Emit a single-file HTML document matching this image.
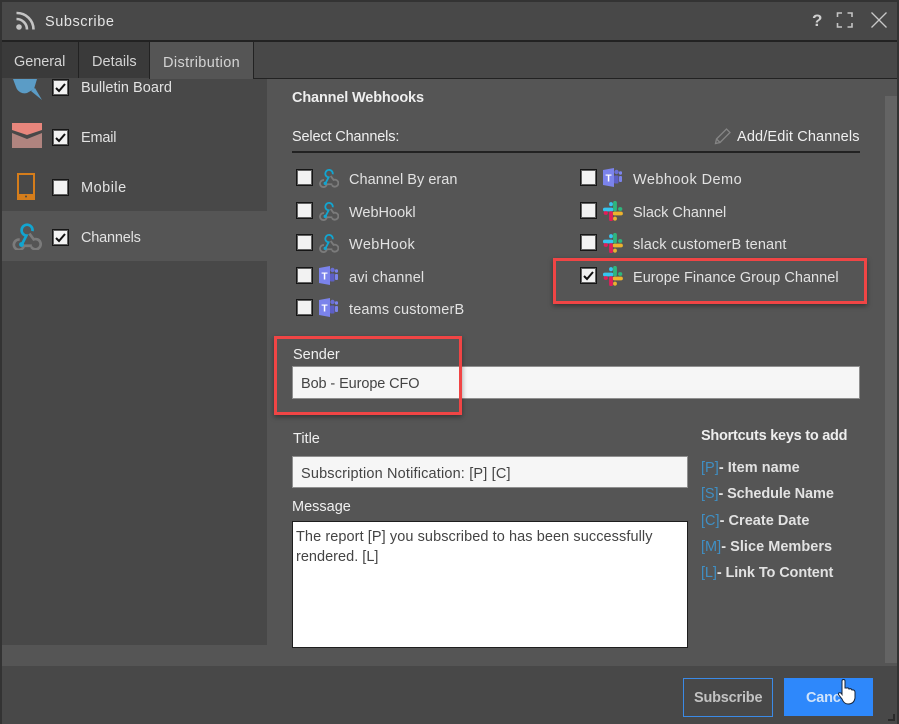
<!DOCTYPE html>
<html><head><meta charset="utf-8"><style>
html,body{margin:0;padding:0;background:#484848}
#r{position:relative;width:899px;height:724px;overflow:hidden;background:#484848;font-family:"Liberation Sans",sans-serif;font-size:14.5px;color:#e2e2e2}
#r div,#r svg{position:absolute}
.t{white-space:nowrap;line-height:20px;height:20px}
.c{width:15px;height:15px;background:#f2f2f2;border:1px solid #161616;box-shadow:0 0 0 1px rgba(50,50,50,.75) inset}
.b{font-weight:bold}
.k{color:#3f8fc4;font-weight:normal}
</style></head><body><div id="r">
<svg width="0" height="0" style="left:0;top:0"><defs>
<g id="hook"><g fill="none" stroke-width="2.2"><path d="M6 14.500 A4.200 4.200 0 1 0 9.500 19.500 H16" stroke="#7b7b7b"/><path d="M14 9.500 L17.500 14.300 A4.200 4.200 0 1 1 15.500 20.500" stroke="#7b7b7b"/><path d="M8 18 L11.500 11.200 A4.500 4.500 0 1 1 16.500 7.500" stroke="#12a5d0"/></g><circle cx="7.500" cy="18.500" r="2" fill="#12a5d0"/></g>
<g id="teams"><circle cx="13.500" cy="4" r="2.200" fill="#6a6fd6"/><circle cx="17.500" cy="5" r="1.700" fill="#7b83eb"/><rect x="11" y="7.500" width="4.500" height="8" rx="1" fill="#5d5fc4"/><rect x="16" y="8" width="3" height="6" rx="1" fill="#7b83eb"/><path d="M0 2 L11 0 V19 L0 17 Z" fill="#7b83eb"/><text x="2.500" y="13.500" font-family="Liberation Sans" font-size="10" font-weight="bold" fill="#fff">T</text></g>
<g id="slack" stroke-width="3.800" stroke-linecap="round" fill="none"><path d="M1.800 8.500 H8.500" stroke="#36c5f0"/><path d="M8 3 V3.400" stroke="#36c5f0"/><path d="M12 1.800 V8.500" stroke="#2eb67d"/><path d="M17 8 H17.400" stroke="#2eb67d"/><path d="M18 12.500 H11.500" stroke="#ecb22e"/><path d="M12 17.500 V17.800" stroke="#ecb22e"/><path d="M8 12 V18.400" stroke="#e01e5a"/><path d="M2.600 12 H3" stroke="#e01e5a"/></g>
</defs></svg>

<div style="left:0;top:0;width:899px;height:2px;background:#333"></div>
<div style="left:0;top:0;width:2px;height:724px;background:#333"></div>
<div style="left:897px;top:0;width:2px;height:724px;background:#333"></div>

<div style="left:2px;top:40px;width:895px;height:2px;background:#222"></div>
<svg style="left:15px;top:11px" width="21" height="20" viewBox="0 0 21 20"><circle cx="4" cy="16" r="2.800" fill="#c4c4c4"/><path d="M1.500 8 A10.500 10.500 0 0 1 12 18.500" fill="none" stroke="#c4c4c4" stroke-width="2.600"/><path d="M1.500 2 A16.500 16.500 0 0 1 18.500 18.500" fill="none" stroke="#c4c4c4" stroke-width="2.600"/></svg>
<div class="t" style="left:45px;top:12px;color:#e4e4e4;letter-spacing:.55px">Subscribe</div>
<div class="t b" style="left:812px;top:11px;color:#cfcfcf;font-size:17px">?</div>
<svg style="left:836px;top:11px" width="18" height="18" fill="none" stroke="#c4c4c4" stroke-width="1.600"><path d="M1.500 6 V2 H6 M11.500 2 H16 V6 M16 12 V16 H11.500 M6 16 H1.500 V12"/></svg>
<svg style="left:870px;top:11px" width="18" height="18" fill="none" stroke="#c8c8c8" stroke-width="1.300"><path d="M1.500 1.500 L16.500 16.500 M16.500 1.500 L1.500 16.500"/></svg>

<div style="left:2px;top:42px;width:76px;height:36px;background:#3a3a3a;border-right:1px solid #222"></div>
<div style="left:79px;top:42px;width:70px;height:36px;background:#3a3a3a"></div>
<div style="left:149px;top:42px;width:103px;height:37px;background:#555;border-left:1px solid #222;border-right:1px solid #222"></div>
<div style="left:253px;top:78px;width:644px;height:1px;background:#222"></div>
<div class="t" style="left:14px;top:52px;color:#d4d4d4;letter-spacing:-.05px">General</div>
<div class="t" style="left:92px;top:52px;color:#d4d4d4;letter-spacing:.05px">Details</div>
<div class="t" style="left:163px;top:53px;color:#d4d4d4;letter-spacing:.38px">Distribution</div>

<div style="left:2px;top:79px;width:895px;height:587px;background:#555"></div>
<div style="left:2px;top:79px;width:265px;height:566px;background:#484848"></div>
<div style="left:2px;top:211px;width:265px;height:50px;background:#555"></div>
<div style="left:885px;top:96px;width:12px;height:567px;background:#646464"></div>

<svg style="left:12px;top:79px" width="32" height="23" viewBox="0 0 32 23"><path d="M1 0 H25 L22 10 L15 14 A9 9 0 0 1 4 8 Z" fill="#5b9cc6"/><path d="M19 12 L30 21 L23 9 Z" fill="#5b9cc6"/></svg>
<div class="c" style="left:52px;top:79px"></div>
<svg style="left:54px;top:82px" width="14" height="12" fill="none" stroke="#111" stroke-width="2"><path d="M2 6 L5 9 L11 2"/></svg>
<div class="t" style="left:81px;top:78px;letter-spacing:.05px">Bulletin Board</div>

<svg style="left:12px;top:123px" width="30" height="25"><rect y="0" width="30" height="25" fill="#b0847f"/><path d="M0 0 H30 V7 L15 12 L0 7 Z" fill="#e8867c"/><path d="M0 7 L15 12 L30 7 V10 L15 16 L0 10 Z" fill="#484848"/></svg>
<div class="c" style="left:52px;top:129px"></div>
<svg style="left:54px;top:132px" width="14" height="12" fill="none" stroke="#111" stroke-width="2"><path d="M2 6 L5 9 L11 2"/></svg>
<div class="t" style="left:81px;top:128px;letter-spacing:-.2px">Email</div>

<svg style="left:17px;top:173px" width="18" height="27"><rect x="1" y="1" width="16" height="25" fill="none" stroke="#d57d1b" stroke-width="2"/><rect x="1" y="21" width="16" height="5" fill="#d57d1b"/><circle cx="9" cy="23.500" r="1" fill="#484848"/></svg>
<div class="c" style="left:52px;top:179px"></div>
<div class="t" style="left:81px;top:178px;letter-spacing:.5px">Mobile</div>

<svg style="left:12px;top:222px" width="30" height="28" viewBox="0 0 24 23"><use href="#hook"/></svg>
<div class="c" style="left:52px;top:229px"></div>
<svg style="left:54px;top:232px" width="14" height="12" fill="none" stroke="#111" stroke-width="2"><path d="M2 6 L5 9 L11 2"/></svg>
<div class="t" style="left:81px;top:228px;letter-spacing:-.2px">Channels</div>

<div class="t b" style="left:292px;top:88px;letter-spacing:-.15px;color:#eee">Channel Webhooks</div>
<div class="t" style="left:292px;top:127px;letter-spacing:-.15px;color:#f0f0f0">Select Channels:</div>
<svg style="left:714px;top:127px" width="18" height="18" fill="none" stroke="#858585" stroke-width="1.300"><path d="M1.500 16.500 L2.500 12 L12.500 2 L16 5.500 L6 15.500 Z M2.500 12 L6 15.500"/></svg>
<div class="t" style="left:737px;top:127px;letter-spacing:.15px;color:#f0f0f0">Add/Edit Channels</div>
<div style="left:292px;top:151px;width:568px;height:2px;background:#222"></div>

<div class="c" style="left:296px;top:169px"></div>
<svg style="left:319px;top:168px" width="20" height="20" viewBox="0 0 24 24"><use href="#hook"/></svg>
<div class="t" style="left:349px;top:170px;letter-spacing:.03px">Channel By eran</div>
<div class="c" style="left:296px;top:202px"></div>
<svg style="left:319px;top:201px" width="20" height="20" viewBox="0 0 24 24"><use href="#hook"/></svg>
<div class="t" style="left:349px;top:203px">WebHookl</div>
<div class="c" style="left:296px;top:234px"></div>
<svg style="left:319px;top:233px" width="20" height="20" viewBox="0 0 24 24"><use href="#hook"/></svg>
<div class="t" style="left:349px;top:235px;letter-spacing:.4px">WebHook</div>
<div class="c" style="left:296px;top:267px"></div>
<svg style="left:319px;top:266px" width="19" height="20" viewBox="0 0 19 20"><use href="#teams"/></svg>
<div class="t" style="left:349px;top:268px;letter-spacing:.18px">avi channel</div>
<div class="c" style="left:296px;top:299px"></div>
<svg style="left:319px;top:298px" width="19" height="20" viewBox="0 0 19 20"><use href="#teams"/></svg>
<div class="t" style="left:349px;top:300px;letter-spacing:.17px">teams customerB</div>

<div class="c" style="left:580px;top:169px"></div>
<svg style="left:603px;top:168px" width="19" height="20" viewBox="0 0 19 20"><use href="#teams"/></svg>
<div class="t" style="left:633px;top:170px;letter-spacing:.45px">Webhook Demo</div>
<div class="c" style="left:580px;top:202px"></div>
<svg style="left:603px;top:201px" width="20" height="20" viewBox="0 0 20 20"><use href="#slack"/></svg>
<div class="t" style="left:633px;top:203px;letter-spacing:-.02px">Slack Channel</div>
<div class="c" style="left:580px;top:234px"></div>
<svg style="left:603px;top:233px" width="20" height="20" viewBox="0 0 20 20"><use href="#slack"/></svg>
<div class="t" style="left:633px;top:235px;letter-spacing:.13px">slack customerB tenant</div>
<div class="c" style="left:580px;top:267px"></div>
<svg style="left:582px;top:270px" width="14" height="12" fill="none" stroke="#111" stroke-width="2"><path d="M2 6 L5 9 L11 2"/></svg>
<svg style="left:603px;top:266px" width="20" height="20" viewBox="0 0 20 20"><use href="#slack"/></svg>
<div class="t" style="left:633px;top:268px;letter-spacing:.03px">Europe Finance Group Channel</div>

<div class="t" style="left:293px;top:345px;color:#f0f0f0">Sender</div>
<div style="left:292px;top:366px;width:566px;height:31px;background:#f6f6f6;border:1px solid #8f8f8f"></div>
<div class="t" style="left:301px;top:374px;color:#444;letter-spacing:-.1px">Bob - Europe CFO</div>

<div class="t" style="left:293px;top:429px;color:#f0f0f0">Title</div>
<div style="left:292px;top:456px;width:394px;height:30px;background:#f6f6f6;border:1px solid #8f8f8f"></div>
<div class="t" style="left:301px;top:464px;color:#444;letter-spacing:.17px">Subscription Notification: [P] [C]</div>

<div class="t" style="left:292px;top:497px;color:#f0f0f0">Message</div>
<div style="left:292px;top:521px;width:394px;height:125px;background:#fff;border:1px solid #1e1e1e"></div>
<div class="t" style="left:296px;top:527px;color:#444;letter-spacing:.08px">The report [P] you subscribed to has been successfully</div>
<div class="t" style="left:296px;top:547px;color:#444;letter-spacing:.02px">rendered. [L]</div>

<div class="t b" style="left:701px;top:426px;letter-spacing:-.25px;color:#eee">Shortcuts keys to add</div>
<div class="t b" style="left:701px;top:458px;letter-spacing:.03px"><span class="k">[P]</span>- Item name</div>
<div class="t b" style="left:701px;top:484px;letter-spacing:-.1px"><span class="k">[S]</span>- Schedule Name</div>
<div class="t b" style="left:701px;top:511px;letter-spacing:.03px"><span class="k">[C]</span>- Create Date</div>
<div class="t b" style="left:701px;top:537px;letter-spacing:.03px"><span class="k">[M]</span>- Slice Members</div>
<div class="t b" style="left:701px;top:563px;letter-spacing:-.1px"><span class="k">[L]</span>- Link To Content</div>

<div style="left:553px;top:258px;width:308px;height:40px;border:3px solid #f04545;box-shadow:0 2px 5px rgba(0,0,0,.4)"></div>
<div style="left:274px;top:336px;width:182px;height:73px;border:3px solid #f04545;box-shadow:0 2px 5px rgba(0,0,0,.4)"></div>

<div style="left:683px;top:678px;width:88px;height:37px;border:1px solid #3b8ae6"></div>
<div class="t b" style="left:694px;top:688px;color:#c2c2c2;letter-spacing:-.2px">Subscribe</div>
<div style="left:784px;top:678px;width:89px;height:38px;background:#2e88fb"></div>
<div class="t b" style="left:806px;top:688px;color:#cfe3fb;letter-spacing:-.2px">Canc</div>
<svg style="left:838px;top:679px" width="18" height="26" viewBox="0 0 18 26"><path d="M4 2 Q4 0.500 5.500 0.500 Q7 0.500 7 2 V9 L9 9 Q10.500 8.500 11 10 Q13 9 14 11 Q16.500 10.500 17 13 V19 Q16 25 10 25 Q6 25 4 20 L0.500 15.500 Q0 13 3 14 L4 15.500 Z" fill="#fff" stroke="#14233a" stroke-width="1"/></svg>
<svg style="left:888px;top:714px" width="8" height="8" fill="#2a2a2a"><rect x="5" y="0" width="2" height="7"/><rect x="0" y="5" width="7" height="2"/></svg>
</div></body></html>
